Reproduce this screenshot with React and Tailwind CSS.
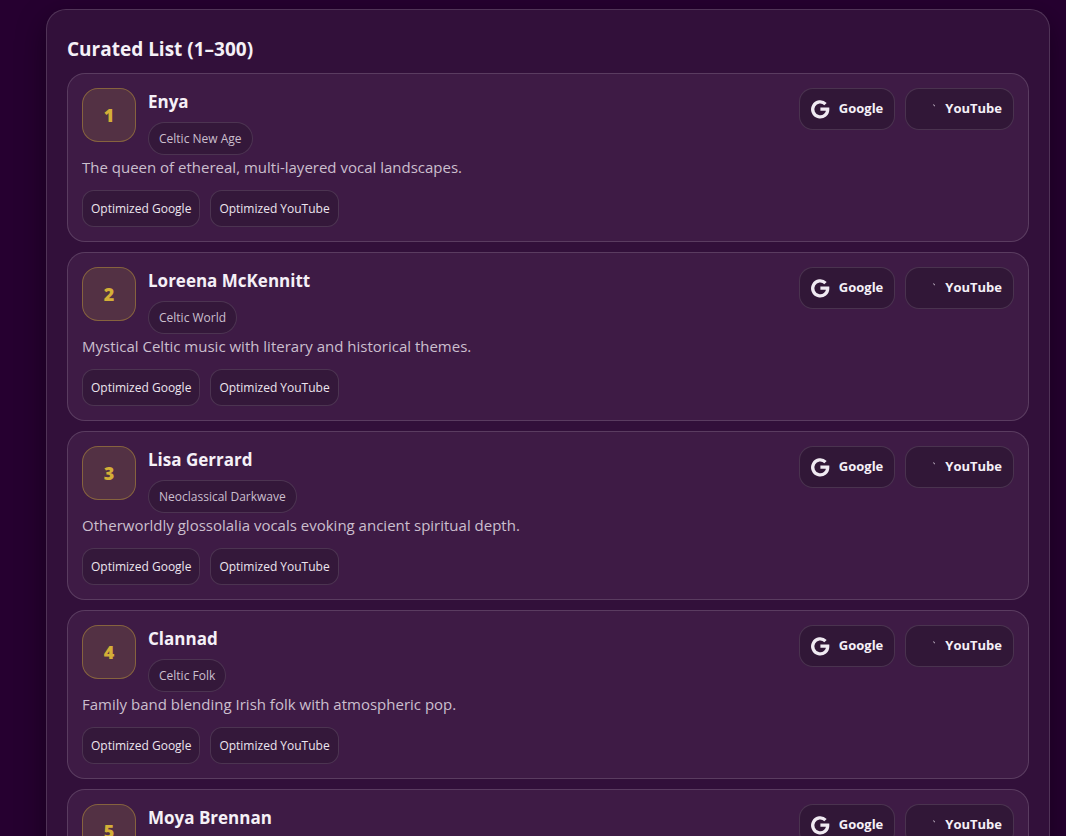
/**
 * CuratedList - ranked artists with search links
 */

import React from 'react';

const artists = [
  { rank: 1, name: 'Enya', genre: 'Celtic New Age', about: 'The queen of ethereal, multi-layered vocal landscapes.' },
  { rank: 2, name: 'Loreena McKennitt', genre: 'Celtic World', about: 'Mystical Celtic music with literary and historical themes.' },
  { rank: 3, name: 'Lisa Gerrard', genre: 'Neoclassical Darkwave', about: 'Otherworldly glossolalia vocals evoking ancient spiritual depth.' },
  { rank: 4, name: 'Clannad', genre: 'Celtic Folk', about: 'Family band blending Irish folk with atmospheric pop.' },
  { rank: 5, name: 'Moya Brennan', genre: 'Celtic Folk', about: 'The voice of Clannad, airy and devotional.' }
];

const googleUrl = (query) => `https://www.google.com/search?q=${encodeURIComponent(query)}`;
const youtubeUrl = (query) => `https://www.youtube.com/results?search_query=${encodeURIComponent(query)}`;

const GoogleIcon = () => (
  <svg width="18" height="18" viewBox="0 0 18 18" fill="none" stroke="#f0eaf2" strokeWidth="3.3" className="overflow-visible" aria-hidden="true">
    <path d="M14.5 4.1A7.5 7.5 0 1 0 16.7 9.1H9.4" />
  </svg>
);

const YouTubeIcon = () => (
  <svg width="18" height="18" viewBox="0 0 18 18" fill="#d8cfdc" aria-hidden="true">
    <path d="M15.9 4.5l1.1 0 1.1 1.6-.8.2z" />
  </svg>
);

const ServiceLink = ({ href, icon, children }) => (
  <a
    href={href}
    className="flex h-[42px] items-center gap-[10px] rounded-[14px] border border-white/12 bg-[#311737] px-[11px] text-[13px] font-bold text-[#f5f0f7]"
  >
    {icon}
    {children}
  </a>
);

const OptimizedLink = ({ href, children }) => (
  <a
    href={href}
    className="flex h-[37px] items-center rounded-xl border border-white/12 bg-[#34183a] px-2 text-xs text-[#ece5ee]"
  >
    {children}
  </a>
);

const ArtistCard = ({ artist }) => {
  const { rank, name, genre, about } = artist;

  return (
    <li className="rounded-[18px] border border-white/15 bg-[#3e1b45] p-[14px]">
      <div className="flex items-start justify-between gap-3">
        <div className="flex items-start gap-3">
          <div className="flex size-[54px] shrink-0 items-center justify-center rounded-2xl border border-[#d4af37]/40 bg-[#533144] text-lg font-extrabold text-[#d4af37]">
            {rank}
          </div>
          <div className="flex flex-col items-start gap-[6px]">
            <h3 className="text-[17px] leading-7 font-bold text-[#f5f0f7]">{name}</h3>
            <span className="flex h-[33px] items-center rounded-full border border-white/12 bg-[#34183a] px-[10px] text-xs text-[#cbbfce]">
              {genre}
            </span>
          </div>
        </div>
        <div className="flex shrink-0 gap-[10px]">
          <ServiceLink href={googleUrl(name)} icon={<GoogleIcon />}>Google</ServiceLink>
          <ServiceLink href={youtubeUrl(name)} icon={<YouTubeIcon />}>YouTube</ServiceLink>
        </div>
      </div>
      <p className="text-[15px] leading-[25px] text-[#cbbfce]">{about}</p>
      <div className="mt-[10px] flex flex-wrap gap-[10px]">
        <OptimizedLink href={googleUrl(`${name} ${genre} best songs`)}>Optimized Google</OptimizedLink>
        <OptimizedLink href={youtubeUrl(`${name} ${genre} full album`)}>Optimized YouTube</OptimizedLink>
      </div>
    </li>
  );
};

const App = () => (
  <div className="min-h-screen bg-[#260030] pt-[9px] pr-4 pb-10 pl-[46px] font-['Open_Sans','Noto_Sans',sans-serif]">
    <section className="rounded-[20px] border border-white/15 bg-[#32103a] p-5 shadow-[0_10px_30px_rgba(0,0,0,0.4)]">
      <h2 className="mt-1 mb-[9px] text-[19px] leading-[30px] font-bold text-[#f5f0f7]">Curated List (1–300)</h2>
      <ol className="flex flex-col gap-[10px]">
        {artists.map((artist) => (
          <ArtistCard key={artist.rank} artist={artist} />
        ))}
      </ol>
    </section>
  </div>
);

export default App;
